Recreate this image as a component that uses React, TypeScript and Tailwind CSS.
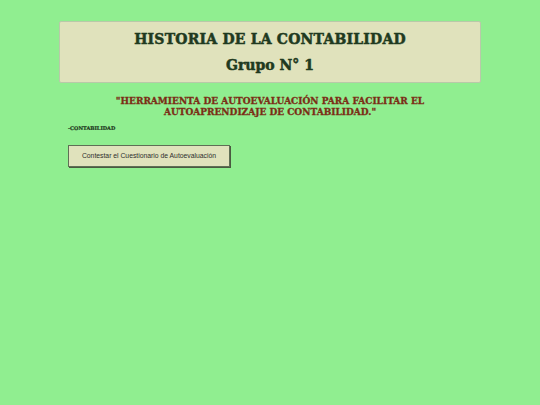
export default function App() {
  return (
    <div className="min-h-[405px] w-full bg-[#90ee90] pt-[21px]">
      <div className="mx-auto flex h-[62px] w-[422px] flex-col items-center justify-center gap-[12px] rounded-[2px] border border-[#b9c9a9] bg-[#e0e2bc] text-[#1f3a20] [font-family:'DejaVu_Serif',serif]">
        <h1 className="text-[14px] font-bold leading-none tracking-[0.2px] [-webkit-text-stroke:0.5px_#1f3a20]">HISTORIA DE LA CONTABILIDAD</h1>
        <h2 className="text-[14px] font-bold leading-none [-webkit-text-stroke:0.5px_#1f3a20]">Grupo N° 1</h2>
      </div>

      <p className="mx-auto mt-[13px] w-[320px] text-center text-[9px] font-bold leading-[11px] text-[#7b2d16] [-webkit-text-stroke:0.3px_#7b2d16] [font-family:'DejaVu_Serif',serif]">
        "HERRAMIENTA DE AUTOEVALUACIÓN PARA FACILITAR EL AUTOAPRENDIZAJE DE CONTABILIDAD."
      </p>

      <p className="ml-[68px] mt-[8px] text-[5px] font-bold leading-none text-[#1f3a20] [-webkit-text-stroke:0.2px_#1f3a20] [font-family:'DejaVu_Serif',serif]">
        -CONTABILIDAD
      </p>

      <button className="ml-[68px] mt-[14px] flex h-[22px] w-[162px] items-center justify-center border border-[#5f6f55] bg-[#e0e2bc] text-[6.8px] text-[#2e2e2e] shadow-[1px_1px_0_#4a5a40] [font-family:'Liberation_Sans',sans-serif]">
        Contestar el Cuestionario de Autoevaluación
      </button>
    </div>
  );
}
